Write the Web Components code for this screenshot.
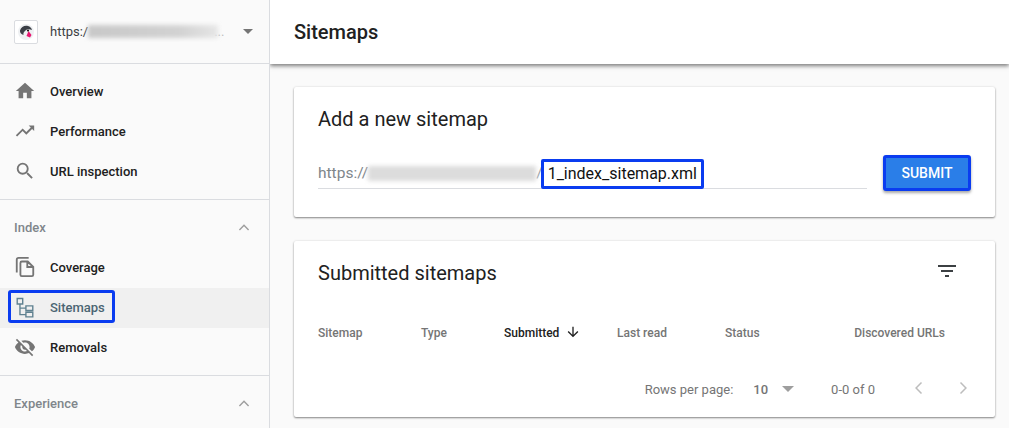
<!DOCTYPE html>
<html>
<head>
<meta charset="utf-8">
<title>Sitemaps</title>
<style>
  html, body { margin: 0; height: 100%; }
  body { font-family: Roboto, "Liberation Sans", sans-serif; background: #fafafa; overflow: hidden; }
  #app { display: flex; height: 428px; width: 1009px; overflow: hidden; }
</style>
</head>
<body>
<div id="app">
  <gsc-sidebar></gsc-sidebar>
  <gsc-main></gsc-main>
</div>

<script>
const ICONS = {
  home: '<path fill="currentColor" d="M10 20v-6h4v6h5v-8h3L12 3 2 12h3v8z"/>',
  trend: '<path fill="currentColor" d="M16 6l2.29 2.29-4.88 4.88-4-4L2 16.59 3.41 18l6-6 4 4 6.3-6.29L22 12V6z"/>',
  search: '<path fill="currentColor" d="M15.5 14h-.79l-.28-.27A6.47 6.47 0 0 0 16 9.5 6.5 6.5 0 1 0 9.5 16c1.61 0 3.09-.59 4.23-1.57l.27.28v.79l5 4.99L20.49 19l-4.99-5zm-6 0C7.01 14 5 11.99 5 9.5S7.01 5 9.5 5 14 7.01 14 9.5 11.99 14 9.5 14z"/>',
  copy: '<path fill="none" stroke="currentColor" stroke-width="2" d="M16 2H5a2 2 0 0 0-2 2v14M8.5 6H15l6 6v8.5a1.500 1.500 0 0 1-1.500 1.500h-11A1.500 1.500 0 0 1 7 20.500v-13A1.500 1.500 0 0 1 8.500 6zM14.500 6v6H21"/>',
  tree: '<path fill="none" stroke="currentColor" stroke-width="1.500" d="M3.500 2.750h6v6h-6zM13 10.750h7.500v5H13zM13 17.750h7.500v5H13zM6.500 8.750V20.250H13M6.500 13.250H13"/>',
  eyeoff: '<path fill="currentColor" d="M12 7c2.76 0 5 2.24 5 5 0 .65-.13 1.260-.36 1.830l2.920 2.920c1.510-1.260 2.700-2.890 3.430-4.750-1.730-4.390-6-7.500-11-7.500-1.400 0-2.740.25-3.980.7l2.160 2.160C10.740 7.130 11.350 7 12 7zM2 4.270l2.280 2.280.46.46C3.080 8.300 1.780 10.020 1 12c1.730 4.390 6 7.500 11 7.500 1.550 0 3.030-.3 4.380-.84l.42.42L19.730 22 21 20.730 3.270 3 2 4.270zM7.530 9.800l1.550 1.550c-.05.21-.08.43-.08.65 0 1.660 1.340 3 3 3 .22 0 .44-.03.65-.08l1.550 1.550c-.67.33-1.410.53-2.200.53-2.760 0-5-2.240-5-5 0-.79.2-1.530.53-2.200z"/>',
  up: '<path fill="none" stroke="currentColor" stroke-width="1.700" d="M6.500 15.500L12 10l5.500 5.500"/>',
  filter: '<path fill="currentColor" d="M3 6h18v2H3zM6 11h12v2H6zM10 16h4v2h-4z"/>',
  arrowdown: '<path fill="currentColor" d="M20 12l-1.410-1.410L13 16.170V4h-2v12.170l-5.580-5.590L4 12l8 8 8-8z"/>',
  prev: '<path fill="none" stroke="currentColor" stroke-width="1.800" d="M15 5.500L8.500 12l6.500 6.500"/>',
  next: '<path fill="none" stroke="currentColor" stroke-width="1.800" d="M9 5.500l6.500 6.500L9 18.500"/>'
};

class GscIcon extends HTMLElement {
  connectedCallback() {
    const size = this.getAttribute('size') || 24;
    this.attachShadow({ mode: 'open' });
    this.shadowRoot.innerHTML = `
      <style>
        :host { display: inline-flex; flex: none; width: ${size}px; height: ${size}px; }
        svg { display: block; width: 100%; height: 100%; }
      </style>
      <svg viewBox="0 0 24 24">${ICONS[this.getAttribute('name')]}</svg>
    `;
  }
}

class NavItem extends HTMLElement {
  connectedCallback() {
    const active = this.hasAttribute('active');
    this.attachShadow({ mode: 'open' });
    this.shadowRoot.innerHTML = `
      <style>
        :host { display: block; position: relative; }
        .row {
          display: flex;
          align-items: center;
          box-sizing: border-box;
          height: 40px;
          padding: 0 0 2px 14px;
          color: ${active ? '#4a6572' : '#212121'};
          background: ${active ? '#f0f0f0' : 'transparent'};
          font-size: 13px;
          font-weight: 500;
        }
        gsc-icon { margin-right: 14px; color: ${active ? '#5f8190' : '#757575'}; }
        .mark {
          position: absolute;
          left: 8px;
          top: 2px;
          width: 101px;
          height: 27px;
          border: 3px solid #0a3cf0;
          border-radius: 3px;
        }
      </style>
      <div class="row"><gsc-icon size="22" name="${this.getAttribute('icon')}"></gsc-icon><slot></slot></div>
      ${active ? '<div class="mark"></div>' : ''}
    `;
  }
}

class NavSection extends HTMLElement {
  connectedCallback() {
    this.attachShadow({ mode: 'open' });
    this.shadowRoot.innerHTML = `
      <style>
        :host { display: block; border-top: 1px solid #dadce0; }
        .head {
          display: flex;
          align-items: center;
          justify-content: space-between;
          height: 42px;
          padding: 6px 15px 0 14px;
          color: #80868b;
          font-size: 13px;
          font-weight: 500;
        }
        gsc-icon { color: #9e9e9e; }
        .items { padding-bottom: 7px; }
      </style>
      <div class="head"><span>${this.getAttribute('label')}</span><gsc-icon size="20" name="up"></gsc-icon></div>
      <div class="items"><slot></slot></div>
    `;
  }
}

class GscSidebar extends HTMLElement {
  connectedCallback() {
    this.attachShadow({ mode: 'open' });
    this.shadowRoot.innerHTML = `
      <style>
        :host {
          display: block;
          flex: none;
          box-sizing: border-box;
          width: 270px;
          height: 428px;
          background: #fafafa;
          border-right: 1px solid #dadce0;
          position: relative;
          z-index: 2;
        }
        .property {
          display: flex;
          align-items: center;
          height: 63px;
          padding: 0 14px;
          border-bottom: 1px solid #dadce0;
          font-size: 13px;
          color: #3c4043;
        }
        .logo {
          display: flex;
          align-items: center;
          justify-content: center;
          box-sizing: border-box;
          width: 24px;
          height: 24px;
          background: #fff;
          border: 1px solid #dadce0;
          border-radius: 2px;
          margin-right: 12px;
          flex: none;
        }
        .blur {
          width: 130px;
          height: 13px;
          background: linear-gradient(90deg, #c8c8c8, #d2d2d2 70%, #e6e6e6);
          filter: blur(2px);
        }
        .dots { color: #bdbdbd; margin-left: -4px; }
        .caret {
          width: 0;
          height: 0;
          border-left: 5px solid transparent;
          border-right: 5px solid transparent;
          border-top: 5px solid #757575;
          margin-left: auto;
          margin-right: 2px;
        }
        .top { padding: 8px 0 7px; }
      </style>
      <div class="property">
        <div class="logo">
          <svg width="18" height="18" viewBox="0 0 18 18">
            <circle cx="9" cy="9" r="8" fill="#eef0f2"/>
            <path d="M3 7.500C4 3.500 8 2 11 3c2 .5 3.500 2 4 4-2.500-1-5-1-6.500.5C7 8.500 6 10.500 6.500 12 4 11.500 2.800 9.500 3 7.500z" fill="#3b3f46"/>
            <path d="M9.500 13l2-5 3 4-1.500 2.500z" fill="#e6156f"/>
            <circle cx="11" cy="7.500" r="1.100" fill="#1b1b1b"/>
          </svg>
        </div>
        <span>https:/</span><div class="blur"></div><span class="dots">...</span>
        <div class="caret"></div>
      </div>
      <div class="top">
        <nav-item icon="home">Overview</nav-item>
        <nav-item icon="trend">Performance</nav-item>
        <nav-item icon="search">URL inspection</nav-item>
      </div>
      <nav-section label="Index">
        <nav-item icon="copy">Coverage</nav-item>
        <nav-item icon="tree" active>Sitemaps</nav-item>
        <nav-item icon="eyeoff">Removals</nav-item>
      </nav-section>
      <nav-section label="Experience"></nav-section>
    `;
  }
}

class GscCard extends HTMLElement {
  connectedCallback() {
    this.attachShadow({ mode: 'open' });
    this.shadowRoot.innerHTML = `
      <style>
        :host {
          display: block;
          background: #fff;
          border-radius: 2px;
          box-shadow: 0 1px 2px rgba(0,0,0,.45), 0 0 3px rgba(0,0,0,.08);
        }
      </style>
      <slot></slot>
    `;
  }
}

class AddSitemap extends HTMLElement {
  connectedCallback() {
    this.attachShadow({ mode: 'open' });
    this.shadowRoot.innerHTML = `
      <style>
        :host { display: block; height: 130px; box-sizing: border-box; padding: 20px 24px 0; }
        h2 { margin: 0 0 24px; font-size: 20px; font-weight: 400; line-height: 24px; color: #212121; }
        .form { display: flex; align-items: flex-start; height: 36px; }
        .field { display: flex; align-items: flex-start; width: 549px; height: 29px; margin-top: 4px; border-bottom: 1px solid #dadce0; flex: none; }
        .prefix { color: #80868b; font-size: 15.500px; line-height: 29px; }
        .blur { width: 168px; height: 15px; margin-top: 7px; background: #dcdcdc; filter: blur(2px); }
        .slash { color: #9aa0a6; font-size: 15.500px; line-height: 29px; margin-right: -2px; }
        .value {
          position: relative;
          box-sizing: border-box;
          height: 30px;
          width: 163px;
          flex: none;
          border: 3px solid #0a3cf0;
          border-radius: 2px;
          background: #fff;
          color: #111;
          font-size: 16px;
          line-height: 24px;
          padding-left: 4px;
          white-space: nowrap;
        }
        button {
          box-sizing: border-box;
          width: 89px;
          height: 36px;
          margin-left: 16px;
          border: 3px solid #0a3cf0;
          border-radius: 3px;
          background: #2a7ee8;
          color: #fff;
          font: 500 14px Roboto, sans-serif;
          box-shadow: 0 2px 3px rgba(0,0,0,.35);
          padding: 0;
        }
      </style>
      <h2>Add a new sitemap</h2>
      <div class="form">
        <div class="field">
          <span class="prefix">https://</span><div class="blur"></div><span class="slash">/</span>
          <div class="value">1_index_sitemap.xml</div>
        </div>
        <button>SUBMIT</button>
      </div>
    `;
  }
}

class SubmittedTable extends HTMLElement {
  connectedCallback() {
    this.attachShadow({ mode: 'open' });
    this.shadowRoot.innerHTML = `
      <style>
        :host { display: block; height: 176px; box-sizing: border-box; padding: 0 24px; }
        .title { display: flex; align-items: center; justify-content: space-between; height: 64px; }
        h2 { margin: 0; font-size: 20px; font-weight: 400; color: #212121; }
        .title gsc-icon { color: #3c4043; margin-right: 12px; margin-top: -4px; }
        .cols {
          display: grid;
          grid-template-columns: 103px 83px 113px 108px 1fr auto;
          align-items: center;
          height: 56px;
          font-size: 12px;
          font-weight: 500;
          color: #757575;
        }
        .sorted { display: flex; align-items: center; color: #212121; gap: 6px; }
        .sorted gsc-icon { color: #212121; margin-top: -2px; }
        .cols .last { margin-right: 26px; }
        .foot {
          display: flex;
          align-items: center;
          justify-content: flex-end;
          height: 56px;
          margin-right: -2px;
          font-size: 13px;
          color: #757575;
        }
        .rows { margin-right: 20px; }
        .num { font-weight: 500; margin-right: 14px; }
        .tri { width: 0; height: 0; border-left: 6px solid transparent; border-right: 6px solid transparent; border-top: 6px solid #9e9e9e; margin-right: 37px; }
        .range { margin-right: 34px; }
        .foot gsc-icon { color: #bdbdbd; margin-top: -2px; }
        .foot gsc-icon + gsc-icon { margin-left: 24px; }
      </style>
      <div class="title">
        <h2>Submitted sitemaps</h2>
        <gsc-icon name="filter"></gsc-icon>
      </div>
      <div class="cols">
        <span>Sitemap</span>
        <span>Type</span>
        <span class="sorted">Submitted <gsc-icon size="16" name="arrowdown"></gsc-icon></span>
        <span>Last read</span>
        <span>Status</span>
        <span class="last">Discovered URLs</span>
      </div>
      <div class="foot">
        <span class="rows">Rows per page:</span>
        <span class="num">10</span>
        <div class="tri"></div>
        <span class="range">0-0 of 0</span>
        <gsc-icon size="20" name="prev"></gsc-icon>
        <gsc-icon size="20" name="next"></gsc-icon>
      </div>
    `;
  }
}

class GscMain extends HTMLElement {
  connectedCallback() {
    this.attachShadow({ mode: 'open' });
    this.shadowRoot.innerHTML = `
      <style>
        :host { display: block; flex: 1; min-width: 0; background: #fafafa; }
        header {
          display: flex;
          align-items: center;
          box-sizing: border-box;
          height: 64px;
          padding-left: 24px;
          background: #fff;
          box-shadow: 0 2px 4px rgba(0,0,0,.5);
          font-size: 20px;
          font-weight: 500;
          color: #212121;
        }
        .content { display: flex; flex-direction: column; gap: 24px; padding: 23px 14px 0 24px; }
      </style>
      <header>Sitemaps</header>
      <div class="content">
        <gsc-card><add-sitemap></add-sitemap></gsc-card>
        <gsc-card><submitted-table></submitted-table></gsc-card>
      </div>
    `;
  }
}

customElements.define('gsc-icon', GscIcon);
customElements.define('nav-item', NavItem);
customElements.define('nav-section', NavSection);
customElements.define('gsc-sidebar', GscSidebar);
customElements.define('gsc-card', GscCard);
customElements.define('add-sitemap', AddSitemap);
customElements.define('submitted-table', SubmittedTable);
customElements.define('gsc-main', GscMain);
</script>
</body>
</html>
